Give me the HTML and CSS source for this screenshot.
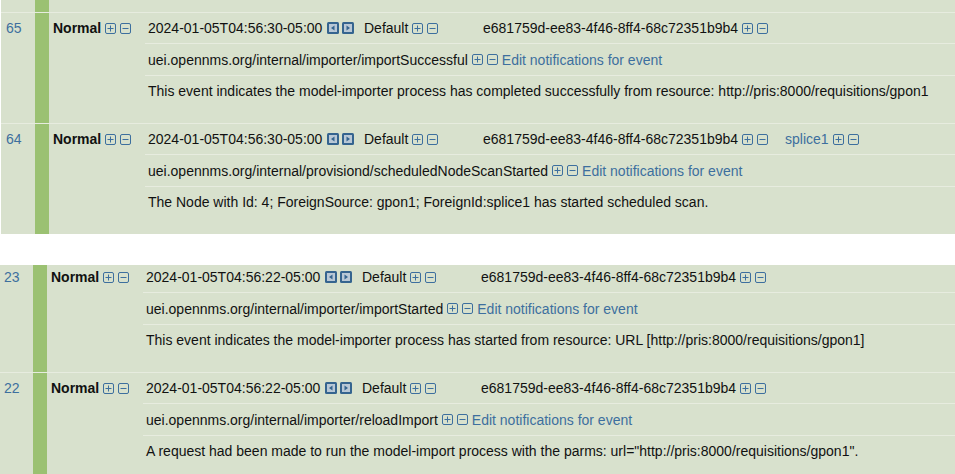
FILE: index.html
```html
<!DOCTYPE html>
<html>
<head>
<meta charset="utf-8">
<link rel="stylesheet" href="styles.css">
</head>
<body>
<svg width="0" height="0" class="defs">
  <defs>
    <symbol id="plus" viewBox="0 0 11 11"><rect x="0.5" y="0.5" width="10" height="10" rx="1.5" fill="none" stroke="#3d6f9e"/><path d="M2.5 5.5h6M5.5 2.5v6" stroke="#3d6f9e" fill="none"/></symbol>
    <symbol id="minus" viewBox="0 0 11 11"><rect x="0.5" y="0.5" width="10" height="10" rx="1.5" fill="none" stroke="#3d6f9e"/><path d="M2.5 5.5h6" stroke="#3d6f9e" fill="none"/></symbol>
    <symbol id="prev" viewBox="0 0 12 12"><rect x="0" y="0" width="12" height="12" rx="1.5" fill="#35648f"/><rect x="2" y="2" width="8" height="8" fill="#b9c8d6"/><path d="M7.5 3.5v5L4 6z" fill="#35648f"/></symbol>
    <symbol id="next" viewBox="0 0 12 12"><rect x="0" y="0" width="12" height="12" rx="1.5" fill="#35648f"/><rect x="2" y="2" width="8" height="8" fill="#b9c8d6"/><path d="M4.5 3.5v5L8 6z" fill="#35648f"/></symbol>
  </defs>
</svg>

<div class="section top">
  <div class="event partial">
    <span class="id"></span><span class="bar"></span><span class="rest"></span>
  </div>

  <div class="event">
    <a class="id">65</a>
    <span class="bar"></span>
    <div class="sev"><b>Normal</b><svg class="ic"><use href="#plus"/></svg><svg class="ic"><use href="#minus"/></svg></div>
    <div class="main">
      <div class="r1">
        <div class="c-time">2024-01-05T04:56:30-05:00<svg class="nav first"><use href="#prev"/></svg><svg class="nav"><use href="#next"/></svg></div>
        <div class="c-def">Default<svg class="ic"><use href="#plus"/></svg><svg class="ic"><use href="#minus"/></svg></div>
        <div class="c-uuid">e681759d-ee83-4f46-8ff4-68c72351b9b4<svg class="ic"><use href="#plus"/></svg><svg class="ic"><use href="#minus"/></svg></div>
      </div>
      <div class="r2">uei.opennms.org/internal/importer/importSuccessful<svg class="ic"><use href="#plus"/></svg><svg class="ic"><use href="#minus"/></svg><a class="link">Edit notifications for event</a></div>
      <div class="r3">This event indicates the model-importer process has completed successfully from resource: http://pris:8000/requisitions/gpon1</div>
    </div>
  </div>

  <div class="event">
    <a class="id">64</a>
    <span class="bar"></span>
    <div class="sev"><b>Normal</b><svg class="ic"><use href="#plus"/></svg><svg class="ic"><use href="#minus"/></svg></div>
    <div class="main">
      <div class="r1">
        <div class="c-time">2024-01-05T04:56:30-05:00<svg class="nav first"><use href="#prev"/></svg><svg class="nav"><use href="#next"/></svg></div>
        <div class="c-def">Default<svg class="ic"><use href="#plus"/></svg><svg class="ic"><use href="#minus"/></svg></div>
        <div class="c-uuid">e681759d-ee83-4f46-8ff4-68c72351b9b4<svg class="ic"><use href="#plus"/></svg><svg class="ic"><use href="#minus"/></svg></div>
        <div class="c-node"><a class="link">splice1</a><svg class="ic"><use href="#plus"/></svg><svg class="ic"><use href="#minus"/></svg></div>
      </div>
      <div class="r2">uei.opennms.org/internal/provisiond/scheduledNodeScanStarted<svg class="ic"><use href="#plus"/></svg><svg class="ic"><use href="#minus"/></svg><a class="link">Edit notifications for event</a></div>
      <div class="r3">The Node with Id: 4; ForeignSource: gpon1; ForeignId:splice1 has started scheduled scan.</div>
    </div>
  </div>
</div>

<div class="bottom-wrap">
  <div class="section bottom">
    <div class="event cut">
      <a class="id">23</a>
      <span class="bar"></span>
      <div class="sev"><b>Normal</b><svg class="ic"><use href="#plus"/></svg><svg class="ic"><use href="#minus"/></svg></div>
      <div class="main">
        <div class="r1">
          <div class="c-time">2024-01-05T04:56:22-05:00<svg class="nav first"><use href="#prev"/></svg><svg class="nav"><use href="#next"/></svg></div>
          <div class="c-def">Default<svg class="ic"><use href="#plus"/></svg><svg class="ic"><use href="#minus"/></svg></div>
          <div class="c-uuid">e681759d-ee83-4f46-8ff4-68c72351b9b4<svg class="ic"><use href="#plus"/></svg><svg class="ic"><use href="#minus"/></svg></div>
        </div>
        <div class="r2">uei.opennms.org/internal/importer/importStarted<svg class="ic"><use href="#plus"/></svg><svg class="ic"><use href="#minus"/></svg><a class="link">Edit notifications for event</a></div>
        <div class="r3">This event indicates the model-importer process has started from resource: URL [http://pris:8000/requisitions/gpon1]</div>
      </div>
    </div>

    <div class="event">
      <a class="id">22</a>
      <span class="bar"></span>
      <div class="sev"><b>Normal</b><svg class="ic"><use href="#plus"/></svg><svg class="ic"><use href="#minus"/></svg></div>
      <div class="main">
        <div class="r1">
          <div class="c-time">2024-01-05T04:56:22-05:00<svg class="nav first"><use href="#prev"/></svg><svg class="nav"><use href="#next"/></svg></div>
          <div class="c-def">Default<svg class="ic"><use href="#plus"/></svg><svg class="ic"><use href="#minus"/></svg></div>
          <div class="c-uuid">e681759d-ee83-4f46-8ff4-68c72351b9b4<svg class="ic"><use href="#plus"/></svg><svg class="ic"><use href="#minus"/></svg></div>
        </div>
        <div class="r2">uei.opennms.org/internal/importer/reloadImport<svg class="ic"><use href="#plus"/></svg><svg class="ic"><use href="#minus"/></svg><a class="link">Edit notifications for event</a></div>
        <div class="r3">A request had been made to run the model-import process with the parms: url="http://pris:8000/requisitions/gpon1".</div>
      </div>
    </div>
  </div>
</div>
</body>
</html>
```

FILE: styles.css
```css
html, body {
  margin: 0;
  padding: 0;
  background: #ffffff;
  height: 474px;
  overflow: hidden;
}
body {
  font-family: "Liberation Sans", Arial, sans-serif;
  font-size: 14px;
  color: #111111;
}
.defs {
  position: absolute;
  width: 0;
  height: 0;
}
.section {
  background: #d8e1cd;
}
.section.top {
  margin-left: 1px;
}
.bottom-wrap {
  margin-top: 31px;
  overflow: hidden;
}
.section.bottom {
  margin-left: -1px;
}
.event {
  display: flex;
  border-top: 1px solid #e7ecdf;
}
.event.partial {
  height: 12px;
  border-top: 0;
}
.event.cut {
  border-top: 0;
  margin-top: -3px;
}
.id {
  width: 34px;
  flex: none;
  box-sizing: border-box;
  padding-left: 5px;
  line-height: 30px;
  color: #3d6f9e;
}
.bar {
  width: 14px;
  flex: none;
  background: #9bc172;
}
.rest {
  flex: 1;
}
.sev {
  width: 96px;
  flex: none;
  box-sizing: border-box;
  padding-left: 4px;
  height: 30px;
  display: flex;
  align-items: center;
}
.sev b {
  color: #111111;
}
.main {
  flex: 1;
  display: flex;
  flex-direction: column;
}
.r1 {
  height: 30px;
  border-bottom: 1px solid #e7ecdf;
  display: flex;
  align-items: center;
}
.r2 {
  height: 31px;
  border-bottom: 1px solid #e7ecdf;
  display: flex;
  align-items: center;
  padding-left: 3px;
}
.r3 {
  height: 47px;
  padding-left: 3px;
  line-height: 30px;
  white-space: nowrap;
}
.c-time, .c-def, .c-uuid, .c-node {
  flex: none;
  box-sizing: border-box;
  padding-left: 3px;
  display: flex;
  align-items: center;
  white-space: nowrap;
}
.c-time { width: 216px; }
.c-def { width: 119px; }
.c-uuid { width: 302px; }
.ic {
  width: 11px;
  height: 11px;
  margin-left: 4px;
  flex: none;
}
.nav {
  width: 12px;
  height: 12px;
  margin-left: 3px;
  flex: none;
}
.nav.first {
  margin-left: 5px;
}
.link {
  color: #3d6f9e;
  margin-left: 4px;
}
.c-node .link {
  margin-left: 0;
}
```
